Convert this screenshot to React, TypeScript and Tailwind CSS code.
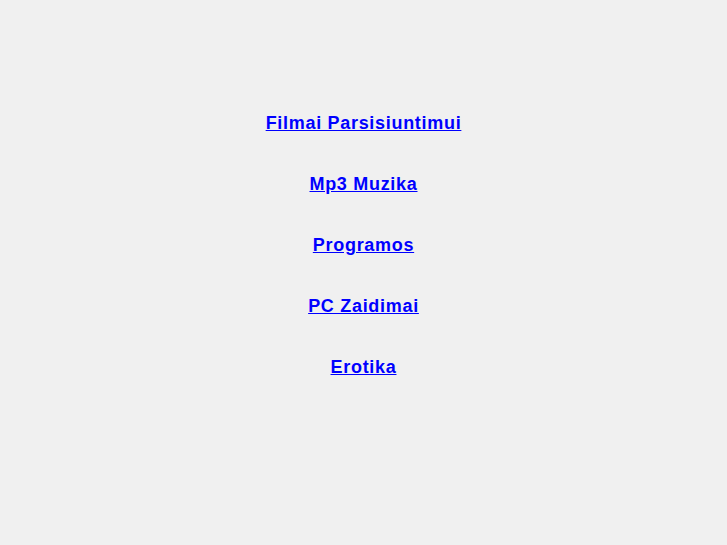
const links = [
  "Filmai Parsisiuntimui",
  "Mp3 Muzika",
  "Programos",
  "PC Zaidimai",
  "Erotika",
];

export default function App() {
  return (
    <div className="min-h-[545px] bg-[#f0f0f0] pt-[113px] font-['Liberation_Sans',Arial,sans-serif]">
      <div className="flex flex-col items-center gap-[40px]">
        {links.map((label) => (
          <a
            key={label}
            href="#"
            className="text-[18px] font-bold leading-[21px] tracking-[0.7px] text-[#0000ff] underline"
          >
            {label}
          </a>
        ))}
      </div>
    </div>
  );
}
